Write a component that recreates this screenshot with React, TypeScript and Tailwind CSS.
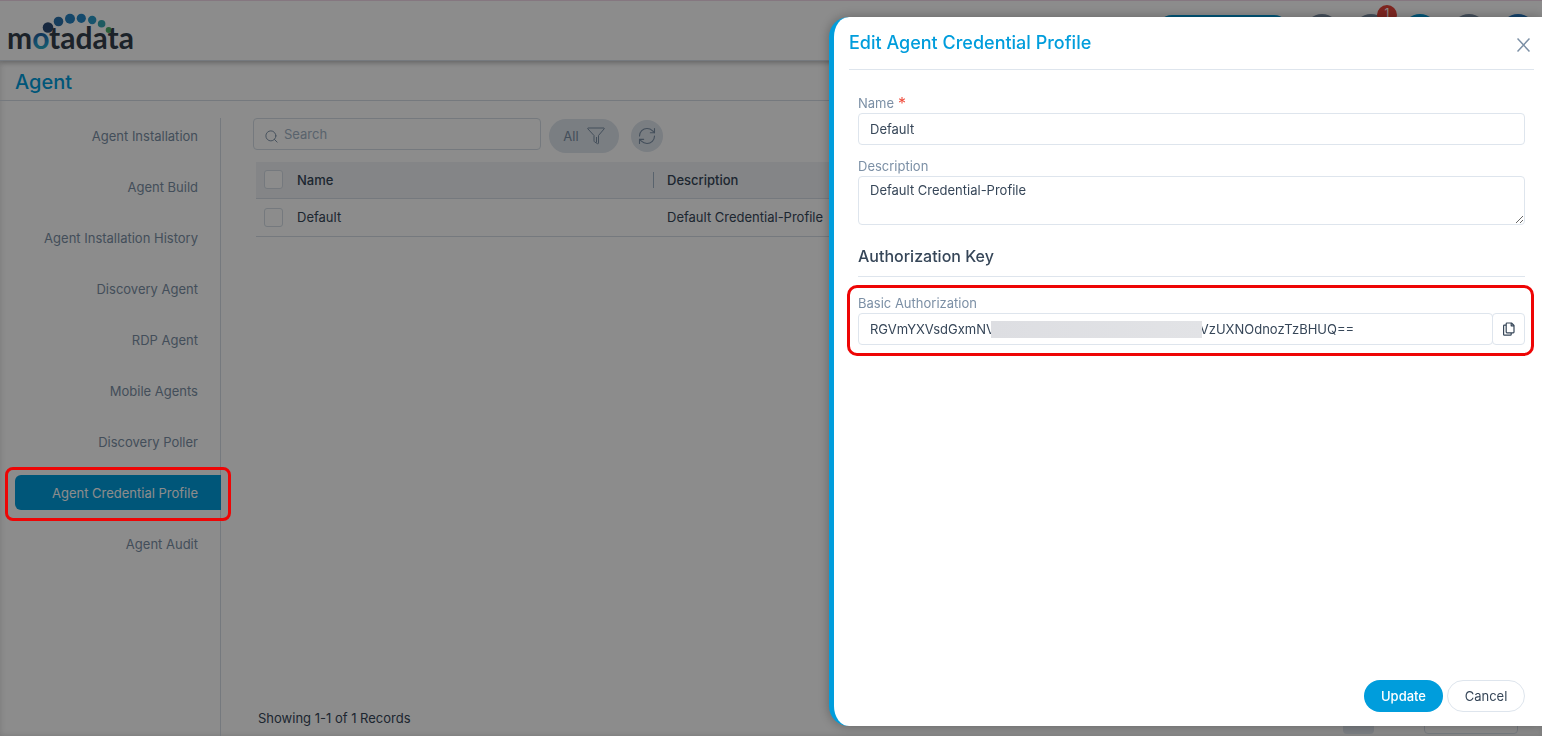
import React, { useState } from 'react';
import { RefreshCw, Search } from 'lucide-react';

const navItems = [
  'Agent Installation',
  'Agent Build',
  'Agent Installation History',
  'Discovery Agent',
  'RDP Agent',
  'Mobile Agents',
  'Discovery Poller',
  'Agent Credential Profile',
  'Agent Audit',
];

const profiles = [{ name: 'Default', description: 'Default Credential-Profile' }];

const headerActions = [
  { label: 'Search', color: 'bg-[#7b8fa5]' },
  { label: 'Notifications', color: 'bg-[#7b8fa5]', badge: 1 },
  { label: 'Create', color: 'bg-[#009ddc]' },
  { label: 'Settings', color: 'bg-[#7b8fa5]' },
  { label: 'Account', color: 'bg-[#2378c3]' },
];

const authKey = 'RGVmYXVsdGxmNV' + '\u00a0'.repeat(56) + 'VzUXNOdnozTzBHUQ==';

function Logo() {
  return (
    <svg width="134" height="56" viewBox="0 0 134 56" role="img" aria-label="motadata">
      <defs>
        <linearGradient id="ring" x1="0" y1="0" x2="0.3" y2="1">
          <stop offset="0.4" stopColor="#1d5596" />
          <stop offset="0.7" stopColor="#2494cb" />
          <stop offset="0.85" stopColor="#2ba9bd" />
          <stop offset="1" stopColor="#52b364" />
        </linearGradient>
      </defs>
      <circle cx="41" cy="24.5" r="5.3" fill="#2b4a73" />
      <circle cx="51.5" cy="18.500" r="4.8" fill="#2970a9" />
      <circle cx="63" cy="15.7" r="5" fill="#2680bf" />
      <circle cx="74.3" cy="15.3" r="4.6" fill="#2688c7" />
      <circle cx="85.2" cy="17" r="4.2" fill="#2b9ac6" />
      <circle cx="94.6" cy="20.8" r="3.8" fill="#37a7af" />
      <circle cx="101.7" cy="27" r="3" fill="#4fae68" />
      <text x="0" y="46" fontSize="30" fontWeight="700" fill="#333e4c" className="font-['Lato',sans-serif]">
        m<tspan fill="url(#ring)">o</tspan>tadata
      </text>
    </svg>
  );
}

function FunnelIcon() {
  return (
    <svg width="18" height="18" viewBox="0 0 18 18" fill="none" stroke="currentColor" strokeLinejoin="round">
      <path d="M1 1h16c.4 0 .4.5.2.8L11.500 8.500v7.600c0 .6-.5.9-1 .6L7.500 14.800c-.4-.3-.5-.6-.5-1V8.500L.8 1.800C.5 1.500.6 1 1 1z" />
      <path d="M9.500 10v5.500" />
    </svg>
  );
}

function CopyIcon() {
  return (
    <svg width="12" height="14" viewBox="0 0 12 14" fill="none" stroke="currentColor" strokeWidth="1.2" strokeLinejoin="round">
      <path d="M4 1h4.500L11 3.500V10a.8.8 0 0 1-.8.8H4a.8.8 0 0 1-.8-.8V1.800A.8.8 0 0 1 4 1z" />
      <path d="M8.200 1v2.800H11" />
      <path d="M3 3.200H1.400a.8.8 0 0 0-.8.8v8.400c0 .4.400.8.800.8h6a.8.8 0 0 0 .8-.8V11" />
    </svg>
  );
}

function TopBar() {
  return (
    <header className="relative z-10 flex h-[61px] items-center justify-between border-t border-b border-t-[#f3d9ea] border-b-[#d5dde6] bg-white px-[7px] shadow-[0_2px_5px_rgba(0,0,0,0.2)]">
      <Logo />
      <div className="flex items-center gap-[15px]">
        <button aria-label="Quick action" className="h-8 w-[134px] rounded-full bg-[#009ddc]" />
        {headerActions.map((action) => (
          <button key={action.label} aria-label={action.label} className={`relative size-[34px] rounded-full ${action.color}`}>
            {action.badge && (
              <span className="absolute -top-[9px] -right-[9px] size-5 rounded-full bg-[#e5443a] text-xs leading-4 text-white">
                {action.badge}
              </span>
            )}
          </button>
        ))}
      </div>
    </header>
  );
}

function Sidebar() {
  return (
    <nav className="w-[221px] shrink-0 border-r border-[#d5dde6] pl-[15px]">
      <ul className="flex flex-col gap-4">
        {navItems.map((item) => {
          const active = item === 'Agent Credential Profile';
          return (
            <li key={item} className="relative -mr-px">
              <a
                href="#"
                className={`flex h-[35px] items-center justify-end rounded-l-md pr-[23px] ${active ? 'bg-[#009ddc] text-white' : 'text-[#7b8fa5]'}`}
              >
                {item}
              </a>
              {active && (
                <span className="pointer-events-none absolute -inset-x-[10px] -top-2 -bottom-[11px] z-50 rounded-lg border-3 border-[#ee0505]" />
              )}
            </li>
          );
        })}
      </ul>
    </nav>
  );
}

function ProfileList() {
  return (
    <main className="flex min-w-0 flex-1 flex-col pr-4 pl-8">
      <div className="flex h-9 items-start">
        <label className="flex h-8 w-[288px] items-center gap-[5px] rounded border border-[#d5dde6] pl-[10px] text-[#7b8fa5]">
          <Search size={15} strokeWidth={1.5} className="mt-1" />
          <input type="search" aria-label="Search" placeholder="Search" className="min-w-0 flex-1 outline-none placeholder:text-[#a3b4c6]" />
        </label>
        <div className="mt-px ml-2 flex items-center gap-3">
          <button className="flex h-[34px] w-[70px] items-center justify-center gap-2 rounded-full bg-[#dee5ed] text-[#7b8fa5]">
            All
            <FunnelIcon />
          </button>
          <button aria-label="Refresh" className="flex size-8 items-center justify-center rounded-full bg-[#dee5ed] text-[#7b8fa5]">
            <RefreshCw size={20} strokeWidth={1.3} />
          </button>
        </div>
      </div>

      <table className="mx-[3px] mt-2 table-fixed border-collapse text-left text-[#364658]">
        <thead>
          <tr className="h-9 border-b border-[#d5dde6] bg-[#f0f3f6]">
            <th className="w-[41px] pl-2">
              <input type="checkbox" aria-label="Select all" className="block size-[19px] appearance-none rounded-[3px] border border-[#d5dde6] bg-white" />
            </th>
            <th className="w-[370px] font-medium">
              <div className="flex items-center justify-between pr-[13px]">
                Name
                <span className="h-4 w-px bg-[#a3b4c6]" />
              </div>
            </th>
            <th className="font-medium">Description</th>
          </tr>
        </thead>
        <tbody>
          {profiles.map((profile) => (
            <tr key={profile.name} className="h-[38px] border-b border-[#d5dde6]">
              <td className="pl-2">
                <input type="checkbox" aria-label={`Select ${profile.name}`} className="block size-[19px] appearance-none rounded-[3px] border border-[#d5dde6]" />
              </td>
              <td>{profile.name}</td>
              <td>{profile.description}</td>
            </tr>
          ))}
        </tbody>
      </table>

      <footer className="mt-auto mr-2 mb-[2px] flex items-center text-[#364658]">
        <p className="flex-1 pl-[5px]">Showing 1-1 of 1 Records</p>
        <button aria-label="Current page" className="mr-[50px] h-8 w-[31px] rounded bg-[#dee5ed]" />
        <button aria-label="Records per page" className="h-8 w-[94px] rounded border border-[#d5dde6]" />
      </footer>
    </main>
  );
}

function EditProfileDrawer() {
  const [name, setName] = useState('Default');
  const [description, setDescription] = useState('Default Credential-Profile');

  return (
    <aside
      role="dialog"
      aria-labelledby="drawer-title"
      className="fixed top-[17px] right-0 bottom-[10px] z-50 flex w-[713px] max-w-full flex-col rounded-l-[20px] border-l-5 border-[#009ddc] bg-white text-[#364658] shadow-[0_0_12px_rgba(0,0,0,0.3)]"
    >
      <div className="mr-2 ml-[15px] flex h-[53px] items-center justify-between border-b border-[#dee5ed]">
        <h2 id="drawer-title" className="text-lg leading-6 font-medium text-[#009ddc]">Edit Agent Credential Profile</h2>
        <button aria-label="Close" className="mt-1 mr-1 text-[#7b8fa5]">
          <svg width="13" height="14" viewBox="0 0 13 14" fill="none" stroke="currentColor" strokeWidth="1.5">
            <path d="M.5.5l12 13M12.500.5l-12 13" />
          </svg>
        </button>
      </div>

      <form className="flex flex-1 flex-col pt-[23px] pr-[17px] pl-6">
        <label htmlFor="name" className="flex gap-1 leading-5 text-[#7b8fa5]">
          Name <span className="text-base leading-5 text-[#f04e3e]">*</span>
        </label>
        <input
          id="name"
          value={name}
          onChange={(e) => setName(e.target.value)}
          className="h-8 rounded border border-[#dee5ed] px-[11px] outline-none"
        />

        <label htmlFor="description" className="mt-[11px] leading-5 text-[#7b8fa5]">Description</label>
        <textarea
          id="description"
          value={description}
          onChange={(e) => setDescription(e.target.value)}
          className="h-[49px] rounded border border-[#dee5ed] px-[11px] py-[3px] leading-5 outline-none"
        />

        <h3 className="mt-[19px] border-b border-[#dee5ed] pb-2 text-base leading-6 font-medium">Authorization Key</h3>

        <div className="relative mt-4">
          <label htmlFor="auth-key" className="block leading-5 text-[#7b8fa5]">Basic Authorization</label>
          <div className="relative flex">
            <input id="auth-key" readOnly value={authKey} className="h-8 min-w-0 flex-1 rounded border border-[#dee5ed] px-[11px] outline-none" />
            <button type="button" aria-label="Copy key" className="-ml-px flex h-8 w-[33px] items-center justify-center rounded border border-[#dee5ed]">
              <CopyIcon />
            </button>
            <span className="absolute top-2 left-[133px] h-[17px] w-[211px] bg-linear-to-r from-[#dddee2] to-[#e2e3e6]" />
          </div>
          <span className="pointer-events-none absolute -top-2 -right-[9px] -bottom-[11px] -left-[11px] rounded-[10px] border-3 border-[#ee0505]" />
        </div>

        <div className="mt-auto flex justify-end gap-1 pb-[14px]">
          <button type="button" className="h-8 w-[79px] rounded-full bg-[#009ddc] font-medium text-white">Update</button>
          <button type="button" className="h-8 w-[78px] rounded-full border border-[#dee5ed]">Cancel</button>
        </div>
      </form>
    </aside>
  );
}

export default function App() {
  return (
    <div className="flex min-h-screen flex-col bg-white font-['Inter',sans-serif] text-[13px] leading-5">
      <TopBar />
      <div className="flex flex-1 flex-col shadow-[inset_0_0_6px_rgba(0,0,0,0.15)]">
        <div className="flex h-10 items-center border-b border-[#d5dde6] pt-[2px] pl-[15px]">
          <h1 className="text-xl font-medium text-[#009ddc]">Agent</h1>
        </div>
        <div className="flex flex-1 pt-[17px]">
          <Sidebar />
          <ProfileList />
        </div>
      </div>
      <div className="fixed inset-0 z-40 bg-black/45" />
      <EditProfileDrawer />
    </div>
  );
}
